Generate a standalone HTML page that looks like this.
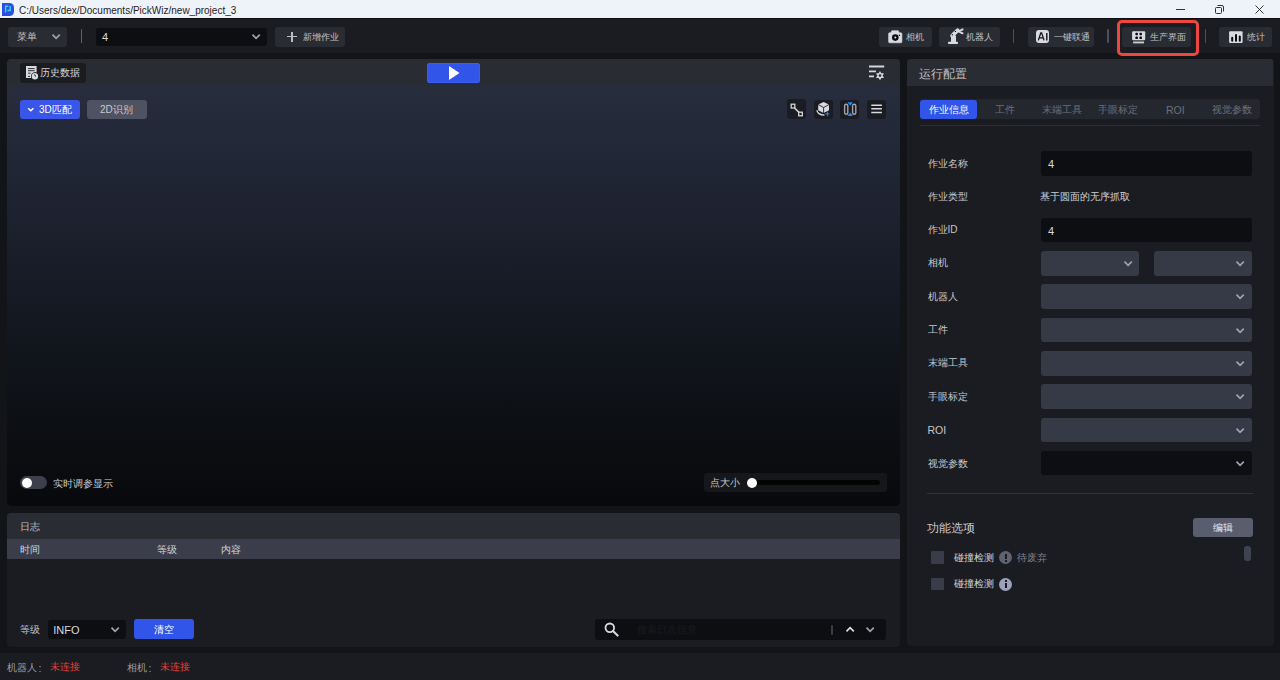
<!DOCTYPE html>
<html><head><meta charset="utf-8">
<style>
*{box-sizing:border-box;margin:0;padding:0}
html,body{width:1280px;height:680px;overflow:hidden;background:#131418;font-family:"Liberation Sans",sans-serif;color:#c8cad0;font-size:10px}
.a{position:absolute}
.t{position:absolute;white-space:nowrap;line-height:1}
.lbl{position:absolute;white-space:nowrap;line-height:1;font-size:10px;color:#c5c7cd}
.btn{position:absolute;background:#2a2c34;border-radius:3px}
.inp{position:absolute;background:#0d0e11;border-radius:3px}
.sel{position:absolute;background:#363946;border-radius:3px}
.cv{position:absolute;overflow:visible}
.cv path{fill:none;stroke:#9da3b8;stroke-width:1.7}
.ibtn{position:absolute;width:19px;height:19.5px;background:#1b1c21;border-radius:3px}
</style></head><body>
<!-- title bar -->
<div class="a" style="left:0;top:0;width:1280px;height:18px;background:#eef2f9"></div>
<svg class="a" style="left:2px;top:3px" width="12" height="13" viewBox="0 0 12 13">
  <path d="M0 0H7.5A4.5 4.5 0 0 1 12 4.5V8.5A4.5 4.5 0 0 1 7.5 13H0Z" fill="#2b4ee3"/>
  <path d="M3.6 9.6V3.3H6.3M8.2 2.9V7.5H5.4" stroke="#3ad6f5" stroke-width="1.4" fill="none"/>
</svg>
<div class="t" style="left:19px;top:5.5px;font-size:10px;color:#1e1e1e">C:/Users/dex/Documents/PickWiz/new_project_3</div>
<div class="a" style="left:1176px;top:8.5px;width:9px;height:1px;background:#333"></div>
<svg class="a" style="left:1215px;top:5px" width="9" height="9" viewBox="0 0 9 9"><rect x="0.5" y="2.5" width="6" height="6" rx="1" fill="none" stroke="#333"/><path d="M2.5 0.5H7A1.5 1.5 0 0 1 8.5 2V6.5" fill="none" stroke="#333"/></svg>
<svg class="a" style="left:1254.5px;top:5px" width="9" height="9" viewBox="0 0 9 9"><path d="M0.5 0.5L8.5 8.5M8.5 0.5L0.5 8.5" stroke="#333" stroke-width="1"/></svg>

<!-- toolbar -->
<div class="a" style="left:0;top:18px;width:1280px;height:35px;background:#1b1c21"></div>
<div class="a" style="left:0;top:18px;width:1280px;height:1px;background:#0e0e10"></div>
<div class="btn" style="left:8px;top:27px;width:59px;height:19.5px"></div>
<div class="lbl" style="left:17px;top:32px;color:#c0c2c8">菜单</div>
<svg class="cv" style="left:51px;top:33px" width="10" height="7"><path d="M1.5 1.7L5.1 5.3L8.8 1.7"/></svg>
<div class="a" style="left:80.6px;top:28.8px;width:1.7px;height:14.3px;background:#5c6272;border-radius:1px"></div>
<div class="inp" style="left:96px;top:28px;width:171px;height:17.6px"></div>
<div class="t" style="left:102px;top:32px;font-size:11px;color:#d6d8de">4</div>
<svg class="cv" style="left:250.7px;top:33.2px" width="10" height="7"><path d="M1.5 1.7L5.1 5.3L8.8 1.7"/></svg>
<div class="btn" style="left:275px;top:27px;width:70px;height:19.5px"></div>
<div class="a" style="left:287px;top:35.8px;width:10.3px;height:1.6px;background:#b8bcc8"></div>
<div class="a" style="left:291.3px;top:31.6px;width:1.6px;height:10px;background:#b8bcc8"></div>
<div class="lbl" style="left:303px;top:32.5px;font-size:9px;color:#c0c2c8">新增作业</div>

<div class="btn" style="left:879px;top:27px;width:52.5px;height:19.8px"></div>
<svg class="a" style="left:888px;top:30px" width="15" height="14" viewBox="0 0 15 14"><path d="M1.6 2.8H2.8L3.8 0.7H10.3L11.3 2.8H12.9A1 1 0 0 1 13.9 3.8V11.8A1 1 0 0 1 12.9 12.8H1.6A1 1 0 0 1 0.6 11.8V3.8A1 1 0 0 1 1.6 2.8Z" fill="#d8dae2" stroke="#d8dae2" stroke-width="0.6" stroke-linejoin="round"/><circle cx="7.3" cy="7.6" r="3.3" fill="#0b0b0d"/><circle cx="7.3" cy="7.6" r="1" fill="#d8dae2"/><circle cx="11.4" cy="5.3" r="0.7" fill="#0b0b0d"/></svg>
<div class="lbl" style="left:906px;top:32.5px;font-size:9px;color:#c0c2c8">相机</div>
<div class="btn" style="left:938.7px;top:27px;width:61px;height:19.8px"></div>
<svg class="a" style="left:945px;top:26px" width="22" height="20" viewBox="0 0 22 20"><rect x="3" y="15.8" width="10" height="2.2" rx="0.8" fill="#d8dae2"/><rect x="6" y="9.5" width="5" height="7" fill="#d8dae2"/><path d="M7.2 9.6L12.6 4.4" stroke="#d8dae2" stroke-width="4" stroke-linecap="round"/><path d="M13.6 5.3L17.6 3.3M13.6 5.3L17.6 7.3" stroke="#d8dae2" stroke-width="1.9" stroke-linecap="round"/><circle cx="7.3" cy="8.7" r="0.7" fill="#1b1c21"/><circle cx="10.4" cy="5.4" r="0.7" fill="#1b1c21"/></svg>
<div class="lbl" style="left:966px;top:32.5px;font-size:9px;color:#c0c2c8">机器人</div>
<div class="a" style="left:1012.8px;top:29px;width:1.5px;height:13.8px;background:#4a5060;border-radius:1px"></div>
<div class="btn" style="left:1027.5px;top:26.8px;width:66.5px;height:20px"></div>
<div class="a" style="left:1036.1px;top:30px;width:13.1px;height:13.1px;background:#d8dae2;border-radius:3px"></div>
<svg class="a" style="left:1036px;top:30px" width="14" height="14" viewBox="0 0 14 14"><path d="M2.3 10.4L4.8 2.9H5.6L8.1 10.4M3.3 7.8H7.1" stroke="#141518" stroke-width="1.3" fill="none"/><path d="M10.8 2.9V10.4" stroke="#141518" stroke-width="1.4"/></svg>
<div class="lbl" style="left:1053.5px;top:32.5px;font-size:9px;color:#c0c2c8">一键联通</div>
<div class="a" style="left:1107.2px;top:29px;width:1.5px;height:13.8px;background:#4a5060;border-radius:1px"></div>
<div class="a" style="left:1117.3px;top:20px;width:82px;height:35.8px;border:3px solid #ec4840;border-radius:5px"></div>
<div class="btn" style="left:1122px;top:26.9px;width:69.3px;height:19.9px"></div>
<svg class="a" style="left:1132px;top:30.5px" width="14" height="13" viewBox="0 0 14 13"><rect x="0.1" y="0.2" width="13.1" height="9.1" rx="1" fill="#d8dae2"/><rect x="3.4" y="1.8" width="2.5" height="2.4" rx="0.6" fill="#0b0b0d"/><rect x="7.5" y="1.8" width="2.4" height="2.4" rx="0.6" fill="#0b0b0d"/><rect x="3.4" y="5.6" width="2.5" height="2.4" rx="0.6" fill="#0b0b0d"/><rect x="7.5" y="5.6" width="2.4" height="2.4" rx="0.6" fill="#0b0b0d"/><rect x="1.1" y="10.5" width="10.9" height="1.9" fill="#c8cad2"/></svg>
<div class="lbl" style="left:1150px;top:32.5px;font-size:9px;color:#c0c2c8">生产界面</div>
<div class="a" style="left:1204.8px;top:29.3px;width:1.5px;height:13.3px;background:#4a5060;border-radius:1px"></div>
<div class="btn" style="left:1219.2px;top:26.9px;width:53.1px;height:19.9px"></div>
<svg class="a" style="left:1229px;top:30.5px" width="14" height="13" viewBox="0 0 14 13"><rect x="0.1" y="0.2" width="13.5" height="11.8" rx="1" fill="#d8dae2"/><path d="M3.2 6.8V9.8M7 4V9.8M10.8 5.4V9.8" stroke="#0b0b0d" stroke-width="2" stroke-linecap="round"/></svg>
<div class="lbl" style="left:1247px;top:32.5px;font-size:9px;color:#c0c2c8">统计</div>

<!-- left panel -->
<div class="a" style="left:7px;top:59px;width:893px;height:447px;border-radius:4px;overflow:hidden;background:#2a2c33">
  <div class="a" style="left:0;top:27px;width:893px;height:420px;background:linear-gradient(#272d3d 0%,#1f2433 25%,#161a24 50%,#0e1116 74%,#08090c 100%)"></div>
</div>
<div class="a" style="left:20.3px;top:63px;width:66px;height:19.5px;background:#1b1c20;border-radius:3px"></div>
<svg class="a" style="left:26px;top:65.8px" width="13" height="15" viewBox="0 0 13 15"><path d="M0 0H10.6V6.5A4.3 4.3 0 0 0 5.5 12.1H0Z" fill="#d8dae2"/><path d="M2 2.6H8.6M2 4.7H8.6M2 7.2H4.6M2 10.4H4" stroke="#1b1c20" stroke-width="0.9"/><circle cx="8.9" cy="10.3" r="3.9" fill="#1b1c20"/><circle cx="8.9" cy="10.3" r="3.2" fill="#d8dae2"/><path d="M8.6 8.4L9.6 10.6" stroke="#1b1c20" stroke-width="1"/></svg>
<div class="lbl" style="left:40px;top:68px;color:#d0d2d8">历史数据</div>
<div class="a" style="left:427px;top:63px;width:53px;height:20px;background:#3155e8;border-radius:3px;box-shadow:inset 0 0 0 1px #3a5ef5"></div>
<svg class="a" style="left:449px;top:66px" width="11" height="14" viewBox="0 0 11 14"><path d="M0 0L10.5 7L0 14Z" fill="#fff"/></svg>
<svg class="a" style="left:869px;top:65px" width="17" height="16" viewBox="0 0 17 16"><path d="M0 1.5H15.2M0 6.4H7M0 11.4H5" stroke="#d4d6dc" stroke-width="1.8"/><g transform="translate(11,10.6)"><path d="M0 -4.6L1.4 -2.3L4 -2.3L2.7 0L4 2.3L1.4 2.3L0 4.6L-1.4 2.3L-4 2.3L-2.7 0L-4 -2.3L-1.4 -2.3Z" fill="#d4d6dc"/><circle r="1.3" fill="#2a2c33"/></g></svg>

<div class="a" style="left:20px;top:99.5px;width:60px;height:19.7px;background:#3a56e8;border-radius:3px"></div>
<svg class="cv" style="left:26.5px;top:106.5px" width="8" height="6"><path d="M1.2 1.2L3.8 3.8L6.4 1.2" style="stroke:#fff;stroke-width:1.5"/></svg>
<div class="lbl" style="left:39px;top:105px;color:#fff">3D匹配</div>
<div class="a" style="left:87px;top:99.5px;width:60px;height:19.7px;background:#4f5260;border-radius:3px"></div>
<div class="lbl" style="left:100px;top:105px;color:#c8cad0">2D识别</div>

<div class="ibtn" style="left:787.3px;top:99.4px"></div>
<svg class="a" style="left:790px;top:102.5px" width="14" height="14" viewBox="0 0 14 14"><rect x="1.2" y="1.2" width="3.6" height="3.8" fill="none" stroke="#d4d6dc" stroke-width="1.3"/><rect x="8.7" y="9.2" width="3.6" height="3.6" fill="none" stroke="#d4d6dc" stroke-width="1.3"/><path d="M4.6 5L9 9.4" stroke="#d4d6dc" stroke-width="1.5"/></svg>
<div class="ibtn" style="left:813.8px;top:99.5px"></div>
<svg class="a" style="left:815px;top:100px" width="16" height="18" viewBox="0 0 16 18"><path d="M8.6 1.9L14 4.5V10.3L8.6 13L3.2 10.3V4.5Z" fill="#d8dae2"/><path d="M3.2 4.5L8.6 7.5L14 4.5M8.6 7.5V13" stroke="#1b1c21" stroke-width="0.9" fill="none"/><path d="M2 10.3C1.8 12.8 5 15 9.5 15.2" stroke="#d8dae2" stroke-width="1.3" fill="none"/><path d="M12.4 10.8L13.1 13.2L15.5 13.9L13.1 14.6L12.4 17L11.7 14.6L9.3 13.9L11.7 13.2Z" fill="#1a86f0"/></svg>
<div class="ibtn" style="left:840.3px;top:99.5px"></div>
<svg class="a" style="left:838px;top:98px" width="24" height="22" viewBox="0 0 24 22"><rect x="6.6" y="6.3" width="3.2" height="10" rx="1.5" fill="none" stroke="#a0a3ad" stroke-width="1.4"/><rect x="14.6" y="6.3" width="3.2" height="10" rx="1.5" fill="none" stroke="#a0a3ad" stroke-width="1.4"/><path d="M9.5 4.3H14.9L12.2 7.8Z" fill="#1a8cff"/><path d="M9.5 17.9H14.9L12.2 14.6Z" fill="#1a8cff"/></svg>
<div class="ibtn" style="left:866.9px;top:99.5px"></div>
<svg class="a" style="left:871px;top:103px" width="11" height="11" viewBox="0 0 11 11"><path d="M0.3 2.2H10.9M0.3 5.8H10.9M0.3 9.5H10.9" stroke="#d8dae2" stroke-width="1.4"/></svg>

<div class="a" style="left:20.3px;top:475.8px;width:26.4px;height:13.7px;background:#3d404b;border-radius:7px"></div>
<div class="a" style="left:21.5px;top:477.5px;width:10.5px;height:10.5px;background:#fff;border-radius:50%"></div>
<div class="lbl" style="left:53px;top:478.5px;color:#c8cad0">实时调参显示</div>

<div class="a" style="left:703.5px;top:472.6px;width:183px;height:19.8px;background:#16171b;border-radius:3px"></div>
<div class="lbl" style="left:709.5px;top:478px;color:#c8cad0">点大小</div>
<div class="a" style="left:751px;top:480px;width:129px;height:5px;background:#040405;border-radius:3px"></div>
<div class="a" style="left:746.5px;top:477.6px;width:10px;height:10px;background:#fff;border-radius:50%"></div>

<!-- log panel -->
<div class="a" style="left:7px;top:513px;width:893px;height:133.5px;border-radius:4px;overflow:hidden;background:#1b1c21">
  <div class="a" style="left:0;top:0;width:893px;height:26.2px;background:#2a2c34"></div>
  <div class="a" style="left:0;top:26.2px;width:893px;height:20.2px;background:#3b3e4a"></div>
</div>
<div class="lbl" style="left:20.3px;top:521.5px;color:#c0c2c8">日志</div>
<div class="lbl" style="left:20px;top:544.5px;color:#d0d2d8">时间</div>
<div class="lbl" style="left:156.5px;top:544.5px;color:#d0d2d8">等级</div>
<div class="lbl" style="left:220.5px;top:544.5px;color:#d0d2d8">内容</div>

<div class="lbl" style="left:19.7px;top:625px;color:#c0c2c8">等级</div>
<div class="inp" style="left:47.6px;top:619.5px;width:78.6px;height:19.7px"></div>
<div class="t" style="left:53.3px;top:624.5px;font-size:11px;color:#d8dae0">INFO</div>
<svg class="cv" style="left:110px;top:625.8px" width="10" height="7"><path d="M1.5 1.7L5.1 5.3L8.8 1.7"/></svg>
<div class="a" style="left:134px;top:619.4px;width:60px;height:19.9px;background:#3155e8;border-radius:3px"></div>
<div class="lbl" style="left:154px;top:625px;color:#fff">清空</div>

<div class="inp" style="left:595.3px;top:618.8px;width:291.1px;height:20.8px"></div>
<svg class="a" style="left:604px;top:622px" width="15" height="15" viewBox="0 0 15 15"><circle cx="5.8" cy="5.8" r="4.3" fill="none" stroke="#d8dae2" stroke-width="1.8"/><path d="M9 9L13.6 13.6" stroke="#d8dae2" stroke-width="2.1" stroke-linecap="round"/></svg>
<div class="lbl" style="left:637px;top:625px;color:#1a1c21">搜索日志信息</div>
<div class="a" style="left:831px;top:624.8px;width:2px;height:10px;background:#3a3d48;border-radius:1px"></div>
<svg class="cv" style="left:845px;top:625.5px" width="10" height="7"><path d="M1.5 5.3L5.1 1.7L8.8 5.3" style="stroke:#e0e2e8"/></svg>
<svg class="cv" style="left:865px;top:625.5px" width="10" height="7"><path d="M1.5 1.7L5.1 5.3L8.8 1.7"/></svg>

<!-- right panel -->
<div class="a" style="left:907px;top:59px;width:366.5px;height:587px;border-radius:4px;overflow:hidden;background:#1b1c21">
  <div class="a" style="left:0;top:0;width:366px;height:26.7px;background:#2a2c33"></div>
</div>
<div class="lbl" style="left:919.3px;top:67.5px;font-size:12px;color:#c0c2c8">运行配置</div>
<div class="a" style="left:920.2px;top:99px;width:339.7px;height:19.9px;background:#25272e;border-radius:3px"></div>
<div class="a" style="left:920.2px;top:99.5px;width:56.5px;height:19.3px;background:#3155e8;border-radius:3px"></div>
<div class="lbl" style="left:928.5px;top:104.5px;color:#fff">作业信息</div>
<div class="lbl" style="left:995px;top:104.5px;color:#6c6f7a">工件</div>
<div class="lbl" style="left:1041.5px;top:104.5px;color:#6c6f7a">末端工具</div>
<div class="lbl" style="left:1098px;top:104.5px;color:#6c6f7a">手眼标定</div>
<div class="t" style="left:1166px;top:104.5px;font-size:10.5px;color:#6c6f7a">ROI</div>
<div class="lbl" style="left:1211.5px;top:104.5px;color:#6c6f7a">视觉参数</div>
<div class="a" style="left:920.2px;top:125px;width:339.7px;height:1px;background:#2c2f38"></div>

<div class="lbl" style="left:927.5px;top:158.5px">作业名称</div>
<div class="inp" style="left:1041px;top:151.4px;width:210.8px;height:24.6px"></div>
<div class="t" style="left:1048px;top:159px;font-size:11px;color:#d8dae0">4</div>
<div class="lbl" style="left:927.5px;top:191.5px">作业类型</div>
<div class="lbl" style="left:1040px;top:191.5px;color:#d0d2d8">基于圆面的无序抓取</div>
<div class="lbl" style="left:927.5px;top:225px">作业ID</div>
<div class="inp" style="left:1041px;top:218.2px;width:210.8px;height:24px"></div>
<div class="t" style="left:1048px;top:225.5px;font-size:11px;color:#d8dae0">4</div>
<div class="lbl" style="left:927.5px;top:258px">相机</div>
<div class="sel" style="left:1041px;top:251.1px;width:98px;height:24.8px"></div>
<svg class="cv" style="left:1122.7px;top:260px" width="10" height="7"><path d="M1.5 1.7L5.1 5.3L8.8 1.7"/></svg>
<div class="sel" style="left:1154px;top:251.1px;width:97.8px;height:24.8px"></div>
<svg class="cv" style="left:1235px;top:260px" width="10" height="7"><path d="M1.5 1.7L5.1 5.3L8.8 1.7"/></svg>
<div class="lbl" style="left:927.5px;top:291.5px">机器人</div>
<div class="sel" style="left:1041px;top:284.4px;width:210.8px;height:24.6px"></div>
<svg class="cv" style="left:1235px;top:293.3px" width="10" height="7"><path d="M1.5 1.7L5.1 5.3L8.8 1.7"/></svg>
<div class="lbl" style="left:927.5px;top:324.5px">工件</div>
<div class="sel" style="left:1041px;top:317.7px;width:210.8px;height:24.6px"></div>
<svg class="cv" style="left:1235px;top:326.6px" width="10" height="7"><path d="M1.5 1.7L5.1 5.3L8.8 1.7"/></svg>
<div class="lbl" style="left:927.5px;top:358px">末端工具</div>
<div class="sel" style="left:1041px;top:351.2px;width:210.8px;height:24.6px"></div>
<svg class="cv" style="left:1235px;top:360px" width="10" height="7"><path d="M1.5 1.7L5.1 5.3L8.8 1.7"/></svg>
<div class="lbl" style="left:927.5px;top:391.5px">手眼标定</div>
<div class="sel" style="left:1041px;top:384.4px;width:210.8px;height:24.6px"></div>
<svg class="cv" style="left:1235px;top:393.3px" width="10" height="7"><path d="M1.5 1.7L5.1 5.3L8.8 1.7"/></svg>
<div class="t" style="left:927.5px;top:425px;font-size:10.5px;color:#c5c7cd">ROI</div>
<div class="sel" style="left:1041px;top:418px;width:210.8px;height:24.3px"></div>
<svg class="cv" style="left:1235px;top:426.6px" width="10" height="7"><path d="M1.5 1.7L5.1 5.3L8.8 1.7"/></svg>
<div class="lbl" style="left:927.5px;top:458.5px">视觉参数</div>
<div class="inp" style="left:1041px;top:451.2px;width:210.8px;height:24.1px"></div>
<svg class="cv" style="left:1235px;top:460px" width="10" height="7"><path d="M1.5 1.7L5.1 5.3L8.8 1.7"/></svg>
<div class="a" style="left:927.3px;top:493px;width:325.4px;height:1.2px;background:#2f323c"></div>

<div class="lbl" style="left:927.3px;top:521.5px;font-size:12px;color:#c8cad0">功能选项</div>
<div class="a" style="left:1192.5px;top:518.2px;width:60.2px;height:19.3px;background:#5a5d6e;border-radius:3px"></div>
<div class="lbl" style="left:1213px;top:523px;color:#e8e9ed">编辑</div>
<div class="a" style="left:930.6px;top:550.9px;width:13.5px;height:13.3px;background:#3a3c4a;border-radius:1px"></div>
<div class="lbl" style="left:954px;top:552.5px;color:#d0d2d8">碰撞检测</div>
<div class="a" style="left:999.2px;top:551.2px;width:13px;height:13px;background:#5f6270;border-radius:50%"></div>
<div class="a" style="left:1004.9px;top:553.8px;width:1.7px;height:5px;background:#1b1c21"></div>
<div class="a" style="left:1004.9px;top:560px;width:1.7px;height:1.7px;background:#1b1c21"></div>
<div class="lbl" style="left:1017.3px;top:552.5px;color:#7d808a">待废弃</div>
<div class="a" style="left:930.6px;top:577.6px;width:13.5px;height:12px;background:#3a3c4a;border-radius:1px"></div>
<div class="lbl" style="left:954px;top:579px;color:#d0d2d8">碰撞检测</div>
<div class="a" style="left:999.2px;top:577.9px;width:13px;height:13px;background:#9ca2bb;border-radius:50%"></div>
<div class="a" style="left:1004.9px;top:580.3px;width:1.7px;height:1.7px;background:#1b1c21"></div>
<div class="a" style="left:1004.9px;top:583px;width:1.7px;height:5.3px;background:#1b1c21"></div>
<div class="a" style="left:1244.4px;top:545.8px;width:6.6px;height:15px;background:#3f4250;border-radius:3px"></div>

<!-- status bar -->
<div class="a" style="left:0;top:653px;width:1280px;height:27px;background:#1b1c21"></div>
<div class="lbl" style="left:6.6px;top:662.5px;font-size:10px;color:#9a9ca6">机器人</div>
<div class="t" style="left:38.5px;top:662.5px;font-size:10.5px;color:#9a9ca6">:</div>
<div class="lbl" style="left:50px;top:662px;font-size:10px;color:#e0403a">未连接</div>
<div class="lbl" style="left:126.7px;top:662.5px;font-size:10px;color:#9a9ca6">相机</div>
<div class="t" style="left:148.5px;top:662.5px;font-size:10.5px;color:#9a9ca6">:</div>
<div class="lbl" style="left:160px;top:662px;font-size:10px;color:#e0403a">未连接</div>
</body></html>
